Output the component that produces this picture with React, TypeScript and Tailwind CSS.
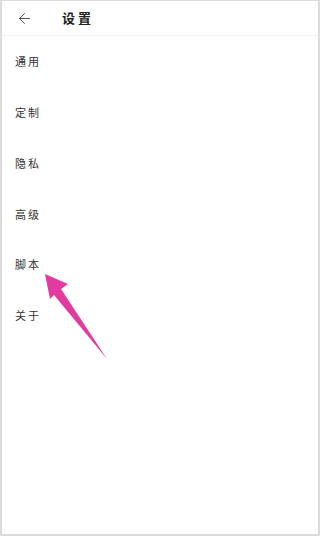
import { ArrowLeft } from 'lucide-react'

const ITEMS = ['通用', '定制', '隐私', '高级', '脚本', '关于']

export default function App() {
  return (
    <div
      className="relative h-[536px] w-[320px] overflow-hidden bg-white border-l-2 border-t border-r-2 border-b-2 border-[#dcdcdc]"
      style={{ fontFamily: '"Noto Sans CJK SC", "Noto Sans", sans-serif' }}
    >
      {/* Header */}
      <div className="flex h-[35px] items-center border-b border-[#f0f0f0]">
        <ArrowLeft className="ml-[14px] h-[17px] w-[17px] text-[#444]" strokeWidth={1.3} />
        <span className="ml-[29px] text-[13px] font-bold tracking-[3px] text-[#222]">设置</span>
      </div>

      {/* List */}
      <div className="flex flex-col">
        {ITEMS.map((item) => (
          <div key={item} className="flex h-[50.8px] items-center pl-[13px]">
            <span className="text-[11px] tracking-[2px] text-[#333]">{item}</span>
          </div>
        ))}
      </div>

      {/* Pointer arrow */}
      <svg
        className="absolute left-0 top-0"
        width="320"
        height="536"
        viewBox="0 0 320 536"
      >
        <polygon
          points="43,273 66,283 59,288 105,358 52,294 48,298"
          fill="#e23a9f"
        />
      </svg>
    </div>
  )
}
